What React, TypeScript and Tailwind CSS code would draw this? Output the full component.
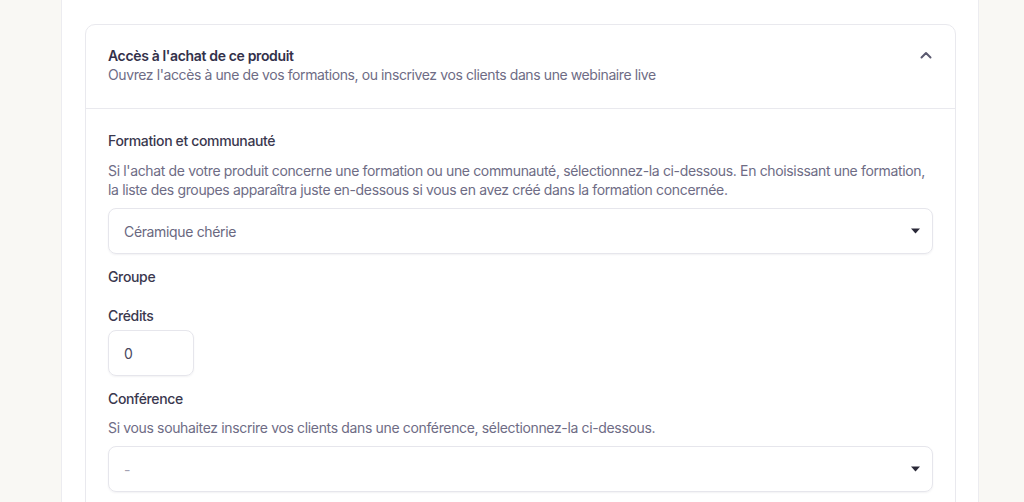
export default function App() {
  const font = { fontFamily: 'Inter, "Noto Sans", sans-serif' };

  const Caret = () => (
    <svg width="9" height="6" viewBox="0 0 9 6" className="text-[#2a2938]">
      <path d="M0 0.5h9L4.5 5.5z" fill="currentColor" />
    </svg>
  );

  return (
    <div className="min-h-screen bg-[#f9f8f4] text-[14px] tracking-[-0.35px]" style={font}>
      <div className="ml-[61px] w-[918px] h-[502px] bg-white border-x border-[#ececf0] overflow-hidden pt-[24px] pl-[23px] pr-[22px]">
        {/* Card */}
        <div className="border border-[#e9e9ee] rounded-[10px] bg-white">
          {/* Header */}
          <div className="flex items-start justify-between pl-[22px] pr-[23px] pt-[21px] pb-[23px] border-b border-[#e9e9ee]">
            <div>
              <div className="font-semibold text-[#33314a] leading-[20px]">Accès à l'achat de ce produit</div>
              <div className="text-[#6e6c85] leading-[20px] mt-[-1px] tracking-[-0.4px]">
                Ouvrez l'accès à une de vos formations, ou inscrivez vos clients dans une webinaire live
              </div>
            </div>
            <svg width="12" height="8" viewBox="0 0 12 8" className="mt-[5px] text-[#5b5a70]">
              <path d="M1.5 6.5L6 2l4.5 4.5" fill="none" stroke="currentColor" strokeWidth="2" strokeLinecap="round" strokeLinejoin="round" />
            </svg>
          </div>

          {/* Body */}
          <div className="px-[22px] pt-[22px] pb-[20px]">
            <div className="font-medium text-[#3a384e] leading-[20px]">Formation et communauté</div>
            <p className="text-[#6e6c85] leading-[19px] mt-[10px]">
              Si l'achat de votre produit concerne une formation ou une communauté, sélectionnez-la ci-dessous. En choisissant une formation,
              la liste des groupes apparaîtra juste en-dessous si vous en avez créé dans la formation concernée.
            </p>
            <div className="mt-[9px] h-[46px] flex items-center justify-between pl-[15px] pr-[12px] border border-[#e6e6ec] rounded-[8px] shadow-[0_1px_2px_rgba(30,30,60,0.06)]">
              <span className="text-[#6a6880]">Céramique chérie</span>
              <Caret />
            </div>

            <div className="font-medium text-[#3a384e] leading-[20px] mt-[13px]">Groupe</div>

            <div className="font-medium text-[#3a384e] leading-[20px] mt-[19px]">Crédits</div>
            <div className="mt-[4px] w-[86px] h-[46px] flex items-center pl-[15px] border border-[#e6e6ec] rounded-[8px] shadow-[0_1px_2px_rgba(30,30,60,0.06)]">
              <span className="text-[#4a485e]">0</span>
            </div>

            <div className="font-medium text-[#3a384e] leading-[20px] mt-[13px]">Conférence</div>
            <p className="text-[#6e6c85] leading-[20px] mt-[9px]">
              Si vous souhaitez inscrire vos clients dans une conférence, sélectionnez-la ci-dessous.
            </p>
            <div className="mt-[8px] h-[46px] flex items-center justify-between pl-[15px] pr-[12px] border border-[#e6e6ec] rounded-[8px] shadow-[0_1px_2px_rgba(30,30,60,0.06)]">
              <span className="text-[#a3a2b3]">-</span>
              <Caret />
            </div>
          </div>
        </div>
      </div>
    </div>
  );
}
